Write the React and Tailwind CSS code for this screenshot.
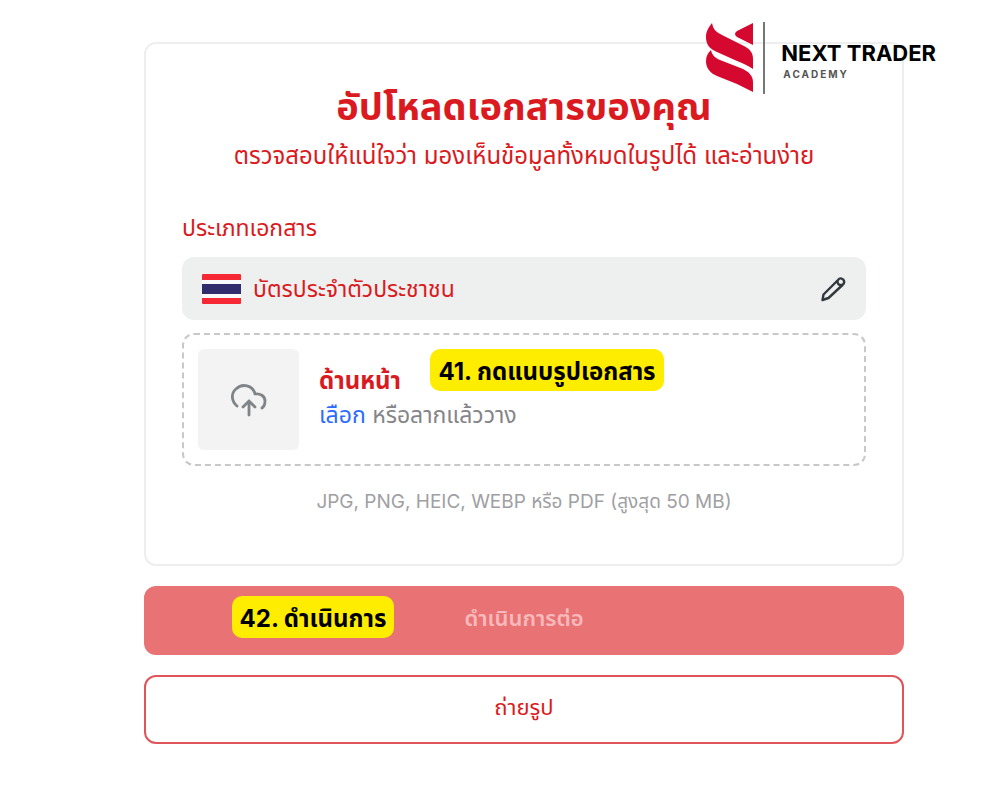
import React from 'react';

const Logo = () => (
  <div className="absolute right-16 top-[22px] flex items-center">
    <svg width="48" height="72" viewBox="0 0 48 72" fill="#d5082f" aria-hidden="true">
      <path d="M6 1 C3 5 0 9 0 15 C0 23 4 27 11 30 L31 39 C38 42 43 44 47 47 V37 C47 31 44 27 38 24 L16 13 C10 10 7 7 6 1Z" />
      <path d="M5 28 C2 31 0 34 0 39 C0 46 4 51 11 54 L31 62 L47 70 V60 C47 54 43 50 37 47 L14 38 C9 36 6 33 5 28Z" />
      <path d="M47 1 L31 9 Q27 12 31 15 L47 23Z" />
    </svg>
    <div className="ml-[9px] h-[72px] w-0.5 bg-[#777]" />
    <div className="mt-1 ml-4 flex flex-col">
      <span className="text-[22px] leading-[28px] font-bold text-black whitespace-nowrap">NEXT TRADER</span>
      <span className="ml-0.5 text-[10px] leading-[14px] font-bold tracking-[0.2em] text-[#555]">ACADEMY</span>
    </div>
  </div>
);

const ThaiFlag = () => (
  <svg width="39" height="30" viewBox="0 0 39 30" aria-hidden="true">
    <rect width="39" height="30" rx="1" fill="#f8f9fb" />
    <path d="M0 6 V1 Q0 0 1 0 H38 Q39 0 39 1 V6Z" fill="#f52834" />
    <rect y="10" width="39" height="10" fill="#312c6b" />
    <path d="M0 24 V29 Q0 30 1 30 H38 Q39 30 39 29 V24Z" fill="#f52834" />
  </svg>
);

const PencilIcon = () => (
  <svg width="26" height="26" viewBox="0 0 26 26" fill="none" stroke="#33383f" strokeWidth="2.4" strokeLinejoin="round" aria-hidden="true">
    <path d="M2.5 24 L3.5 18.5 L18 4 Q20.5 1 23.2 3.6 Q25.5 6.500 22.500 9 L8.500 22Z" />
    <path d="M17.500 4.500 Q17 9.500 22 9" />
  </svg>
);

const CloudIcon = () => (
  <svg width="36" height="34" viewBox="0 0 36 34" fill="none" stroke="#7f8488" strokeWidth="2.8" strokeLinecap="round" strokeLinejoin="round" aria-hidden="true">
    <path d="M6 23 C0 18 0 10 5 6 C11 0 22 2 24 11 C29 10 34 13 34 18 Q34 23 31 25" />
    <path d="M18 32 V18 M12 24 L18 18 L24 24" />
  </svg>
);

export default function App() {
  return (
    <main className="relative min-h-screen bg-white pt-[42px] pr-24 pb-14 pl-36 font-['Inter','Noto_Sans_Thai','Noto_Sans',sans-serif] text-[#da1a20]">
      <section className="rounded-xl border-2 border-[#eee] px-9 pt-9 pb-[46px]">
        <h1 className="text-center text-[38px] leading-[52px] font-bold">อัปโหลดเอกสารของคุณ</h1>
        <p className="mt-2 text-center text-[24px] leading-8">
          ตรวจสอบให้แน่ใจว่า มองเห็นข้อมูลทั้งหมดในรูปได้ และอ่านง่าย
        </p>

        <h2 id="doc-type" className="mt-10 text-[23px] leading-8">ประเภทเอกสาร</h2>
        <button
          type="button"
          aria-describedby="doc-type"
          className="mt-[13px] flex h-[63px] w-full items-center rounded-xl bg-[#eef0f0] px-5"
        >
          <ThaiFlag />
          <span className="ml-3 text-[23px] leading-8">บัตรประจำตัวประชาชน</span>
          <span className="ml-auto">
            <PencilIcon />
          </span>
        </button>

        <div className="relative mt-[13px]">
          <label
            htmlFor="front"
            className="flex cursor-pointer items-center gap-5 rounded-xl border-2 border-dashed border-[#c8c8c8] p-3.5"
          >
            <span className="flex size-[101px] items-center justify-center rounded-md bg-[#f3f3f3]">
              <CloudIcon />
            </span>
            <span className="flex flex-col pb-1 text-[23px] leading-[34px]">
              <span className="text-[24px] font-bold">ด้านหน้า</span>
              <span className="text-[#858589]">
                <span className="text-[#2c6bff]">เลือก</span> หรือลากแล้ววาง
              </span>
            </span>
          </label>
          <input id="front" type="file" className="sr-only" />
          <div className="absolute top-4 left-[248px] flex h-[42px] w-[234px] items-center justify-center rounded-[10px] bg-[#ffed00] pt-1 text-[24px] font-bold whitespace-nowrap text-black">
            41. กดแนบรูปเอกสาร
          </div>
        </div>

        <p className="mt-5 text-center text-[19px] leading-8 text-[#a0a0a3]">JPG, PNG, HEIC, WEBP หรือ PDF (สูงสุด 50 MB)</p>
      </section>

      <div className="relative mt-5">
        <button type="button" className="h-[69px] w-full rounded-xl bg-[#e97275] pb-1 text-[22px] font-semibold text-[#f7b9ba]">
          ดำเนินการต่อ
        </button>
        <div className="absolute top-2.5 left-[88px] flex h-[42px] w-[162px] items-center justify-center rounded-[10px] bg-[#ffed00] pt-1 text-[24px] font-bold whitespace-nowrap text-black">
          42. ดำเนินการ
        </div>
      </div>
      <button type="button" className="mt-5 h-[69px] w-full rounded-xl border-2 border-[#df555a] pb-1 text-[22px]">
        ถ่ายรูป
      </button>

      <Logo />
    </main>
  );
}
